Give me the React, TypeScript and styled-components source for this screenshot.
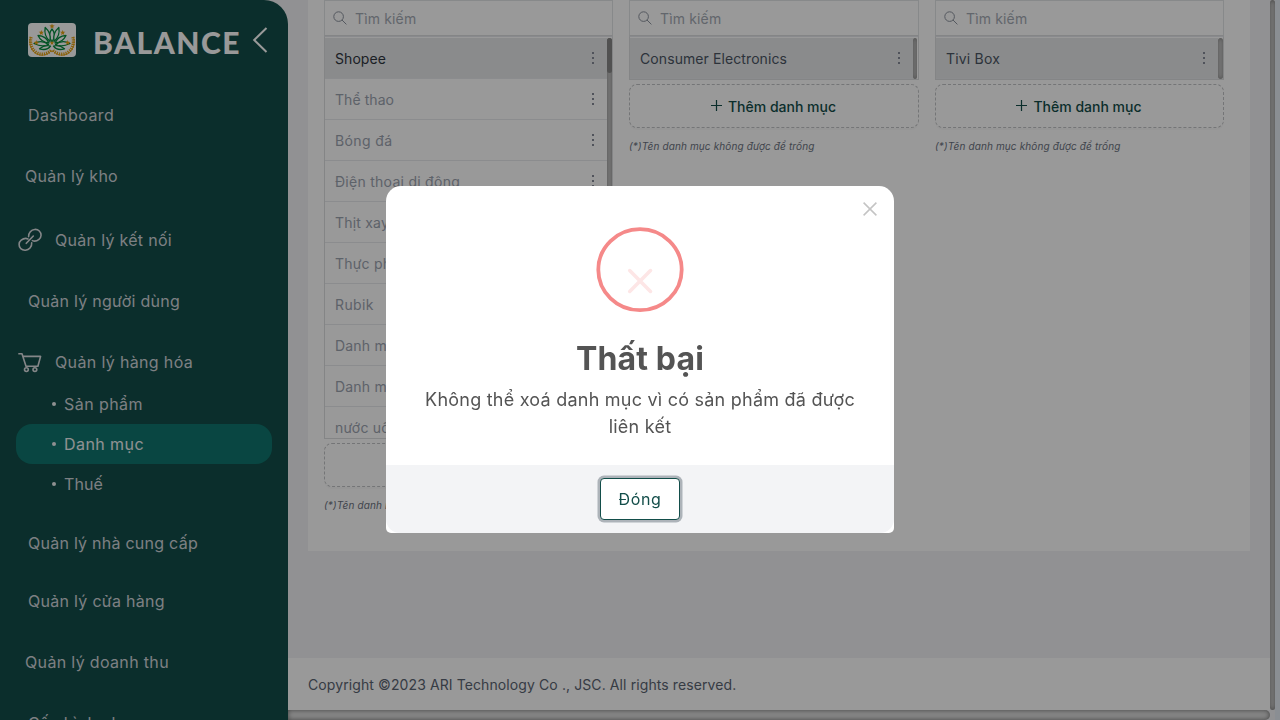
import React from 'react';
import styled, { createGlobalStyle, css } from 'styled-components';

const GlobalStyle = createGlobalStyle`
  *, *::before, *::after { box-sizing: border-box; }
  body {
    margin: 0;
    overflow: hidden;
    font-family: Inter, 'Noto Sans', sans-serif;
    background: #e6edf5;
  }
  button { font-family: inherit; cursor: pointer; }
`;

const Page = styled.div`
  display: flex;
  width: 1280px;
  height: 720px;
  overflow: hidden;
  background: #f2f2f5;
`;

/* ---------- sidebar ---------- */

const Sidebar = styled.aside`
  flex: none;
  width: 288px;
  height: 720px;
  overflow: hidden;
  background: #134e4a;
  border-top-right-radius: 24px;
`;

const Brand = styled.header`
  display: flex;
  align-items: center;
  height: 80px;
  padding-left: 28px;
`;

const LogoBox = styled.div`
  width: 48px;
  height: 34px;
  border-radius: 4px;
  overflow: hidden;
  background: #fff;
  svg { display: block; }
`;

const BrandName = styled.span`
  width: 148px;
  margin: 3px 0 0 17px;
  font: 900 30px/40px Lato, sans-serif;
  letter-spacing: 1.5px;
  color: #fff;
`;

const CollapseButton = styled.button`
  margin-left: 11px;
  padding: 0;
  border: 0;
  background: none;
  svg { display: block; }
`;

const Nav = styled.nav`
  display: flex;
  flex-direction: column;
  padding: 15px 16px 0;
`;

const NavItem = styled.a<{ $space: number; $indent: number; $track: number }>`
  display: flex;
  flex: none;
  align-items: center;
  height: 40px;
  margin-top: ${(p) => p.$space}px;
  padding-left: ${(p) => p.$indent}px;
  font-size: 16px;
  letter-spacing: ${(p) => p.$track}px;
  white-space: nowrap;
  color: #d1d5db;
`;

const NavIcon = styled.span`
  display: flex;
  width: 38px;
`;

const SubItem = styled(NavItem)<{ $active?: boolean }>`
  border-radius: 16px;
  ${(p) => p.$active && css`
    background: #0f766e;
    color: #f0f2f4;
  `}
  &::before {
    content: '';
    width: 4px;
    height: 4px;
    margin-right: 8px;
    border-radius: 50%;
    background: #eef0f2;
  }
`;

/* ---------- content ---------- */

const Main = styled.div`
  display: flex;
  flex-direction: column;
  flex: none;
  width: 982px;
  height: 720px;
`;

const Card = styled.section`
  display: flex;
  align-items: flex-start;
  gap: 16px;
  width: 942px;
  height: 551px;
  margin: 0 20px;
  padding: 0 16px;
  background: #fff;
`;

const Column = styled.div<{ $width: number }>`
  flex: none;
  width: ${(p) => p.$width}px;
`;

const SearchField = styled.div`
  display: flex;
  align-items: center;
  gap: 8px;
  height: 36px;
  padding: 0 0 0 8px;
  border: 1px solid #e2e4e6;
  border-bottom-color: #dcdee0;
  font-size: 14px;
  letter-spacing: 0.15px;
  color: #a4aab4;
  svg { margin-top: -1px; }
`;

const List = styled.div<{ $height: number }>`
  display: flex;
  height: ${(p) => p.$height}px;
  padding-top: 1px;
  overflow: hidden;
  border: 1px solid #dcdee0;
  border-top-color: #e5e7eb;
`;

const Rows = styled.div`
  flex: 1;
  min-width: 0;
`;

const Row = styled.div<{ $selected?: boolean; $strong?: boolean; $track: number }>`
  display: flex;
  align-items: center;
  justify-content: space-between;
  height: 41px;
  padding: 1px 13px 0 10px;
  border-bottom: 1px solid #e8eaed;
  font-size: 14px;
  letter-spacing: ${(p) => p.$track}px;
  white-space: nowrap;
  color: ${(p) => (p.$strong ? '#30363f' : p.$selected ? '#4b5563' : '#9ca3af')};
  background: ${(p) => (p.$selected ? '#e6e8ea' : '#fff')};
`;

const Dots = styled.span`
  display: flex;
  flex-direction: column;
  gap: 3px;
  margin-top: -1px;
  i {
    width: 2px;
    height: 2px;
    background: #858b98;
  }
`;

const Track = styled.div<{ $inset: number }>`
  flex: none;
  width: ${(p) => 5 - p.$inset}px;
  margin-right: ${(p) => p.$inset}px;
  border-radius: 3px;
  background: #d0d0d0;
  box-shadow: inset 0 0 4px rgba(0, 0, 0, 0.4);
`;

const Thumb = styled.div`
  height: 35px;
  border-radius: 3px;
  background: #888;
`;

const AddButton = styled.button`
  display: flex;
  align-items: center;
  justify-content: center;
  gap: 6px;
  width: 100%;
  height: 44px;
  margin: 4px 0 0;
  padding: 1px 1px 0 0;
  border: 1px dashed #c2c4c6;
  border-radius: 8px;
  background: #fff;
  box-shadow: 0 2px 0 rgba(0, 0, 0, 0.02);
  font-size: 14px;
  font-weight: 450;
  color: #134e4a;
  svg { margin-top: -2px; }
`;

const Hint = styled.p`
  margin: 9px 0 0;
  font-size: 10px;
  line-height: 18px;
  font-style: italic;
  letter-spacing: 0.13px;
  color: #6b7280;
`;

const Footer = styled.footer`
  height: 52px;
  margin-top: 107px;
  padding: 1px 20px 0;
  font-size: 14px;
  line-height: 52px;
  letter-spacing: 0.1px;
  color: #5b6472;
  background: #fff;
`;

const ScrollBar = styled.div<{ $vertical?: boolean }>`
  flex: none;
  border-radius: 5px;
  background: #dedede;
  box-shadow: inset 0 0 5px rgba(0, 0, 0, 0.5);
  ${(p) => (p.$vertical
    ? css`width: 5px; height: 710px; background: #dedede;`
    : css`height: 10px; border-top-left-radius: 0; border-bottom-left-radius: 0;`)}
`;

const Edge = styled.div`
  flex: 1;
  background: #e6edf5;
`;

/* ---------- dialog ---------- */

const Backdrop = styled.div`
  position: fixed;
  inset: 0;
  display: flex;
  align-items: center;
  justify-content: center;
  padding-bottom: 1px;
  background: rgba(0, 0, 0, 0.4);
`;

const Dialog = styled.div`
  position: relative;
  display: flex;
  flex-direction: column;
  align-items: center;
  width: 508px;
  height: 347px;
  border-radius: 15px 15px 5px 5px;
  overflow: hidden;
  background: #fff;
`;

const CloseButton = styled.button`
  position: absolute;
  top: 16px;
  right: 17px;
  padding: 0;
  border: 0;
  background: none;
  svg { display: block; }
`;

const ErrorMark = styled.svg`
  flex: none;
  margin-top: 41px;
`;

const Title = styled.h2`
  margin: 24px 0 0;
  font-size: 32px;
  line-height: 44px;
  font-weight: 700;
  letter-spacing: 0.15px;
  color: #545454;
`;

const Message = styled.p`
  width: 450px;
  margin: 5px 0 0;
  font-size: 18px;
  line-height: 27px;
  letter-spacing: 0.23px;
  text-align: center;
  color: #545454;
`;

const Actions = styled.div`
  display: flex;
  justify-content: center;
  align-items: center;
  width: 100%;
  height: 68px;
  margin-top: auto;
  border-radius: 0 0 14px 14px;
  background: #f3f4f6;
`;

const ConfirmButton = styled.button`
  width: 80px;
  height: 42px;
  padding: 0;
  border: 1px solid #134e4a;
  border-radius: 4px;
  background: #fff;
  box-shadow: 0 0 0 2.5px #adb3b9;
  font-size: 16px;
  letter-spacing: 0.65px;
  color: #134e4a;
`;

/* ---------- drawings ---------- */

const star = (x: number, y: number, r: number) =>
  Array.from({ length: 10 }, (_, i) => {
    const radius = i % 2 ? r * 0.42 : r;
    const a = (i * Math.PI) / 5 - Math.PI / 2;
    return `${(x + radius * Math.cos(a)).toFixed(2)},${(y + radius * Math.sin(a)).toFixed(2)}`;
  }).join(' ');

const Laurel = () => (
  <g fill="none" stroke="#e5a215">
    <path d="M2.5 14C1 19 2 27 8 30.5C13 33.5 19 32.5 23.5 27.5" strokeWidth="0.9" />
    <path d="M3.2 14C1.7 19 2.7 26 8.5 29.6C13 32.3 19 31.5 23 27.3" strokeWidth="3.2" strokeDasharray="1.3 1" />
  </g>
);

const Logo = () => (
  <svg width="48" height="34" viewBox="0 0 48 34">
    <Laurel />
    <g transform="matrix(-1 0 0 1 48 0)"><Laurel /></g>
    <g fill="#fff" stroke="#078a3e" strokeWidth="1.3" strokeLinejoin="round">
      <path d="M24 19C20.5 14 21 9.5 24 6C27 9.5 27.5 14 24 19Z" />
      <path d="M22 18.5C17.5 14.5 16.2 9.5 17.2 4.5C21.3 8 23 13 22 18.5Z" />
      <path d="M26 18.5C30.5 14.5 31.8 9.5 30.8 4.5C26.7 8 25 13 26 18.5Z" />
      <path d="M21 20C15.5 19.5 12 16.8 10 12.5C15.5 12.8 19 15 21 20Z" />
      <path d="M27 20C32.5 19.5 36 16.8 38 12.5C32.5 12.8 29 15 27 20Z" />
      <path d="M20.5 21.5C15.5 24 11 23 6 20.5C11 17.8 16 18 20.5 21.5Z" />
      <path d="M27.5 21.5C32.5 24 37 23 42 20.5C37 17.8 32 18 27.5 21.5Z" />
      <path d="M22.5 23C20 26.5 15.5 27 11.5 25.8C15 22.8 19 22 22.5 23Z" />
      <path d="M25.5 23C28 26.5 32.5 27 36.5 25.8C33 22.8 29 22 25.5 23Z" />
    </g>
    <g fill="#e5a215">
      <polygon points={star(24, 3.3, 2.8)} />
      <polygon points={star(13.3, 9.7, 2.8)} />
      <polygon points={star(34.7, 9.7, 2.8)} />
      <polygon points={star(8.3, 19.8, 2.8)} />
      <polygon points={star(39.7, 19.8, 2.8)} />
      <polygon points={star(24, 20, 2.4)} />
    </g>
  </svg>
);

const LinkIcon = () => (
  <svg width="26" height="26" viewBox="0 0 26 26" fill="none" stroke="#dcdfe3" strokeWidth="1.6" strokeLinecap="round">
    <path d="M11.6 9.6C11.4 7.6 12 6.2 13.3 4.7C15.6 2 19.8 1.6 22.3 4C24.8 6.4 24.6 10.2 22 12.3C19.8 14.1 17.3 14.5 15.4 13.6" />
    <path d="M14.7 15.8C14.9 17.8 14.4 19.4 13 21C10.7 23.6 6.4 24.1 3.8 21.7C1.3 19.2 1.6 15.3 4.2 13.2C6.3 11.5 8.9 11 11 11.9" />
    <path d="M9.3 16.3L16.3 9" />
  </svg>
);

const CartIcon = () => (
  <svg width="26" height="26" viewBox="0 0 26 26" fill="none" stroke="#dcdfe3" strokeWidth="1.6" strokeLinejoin="round">
    <path d="M1.3 4.7H5L9 17.3H20.9L23.6 7.4H6.1" />
    <circle cx="9.4" cy="20.6" r="1.9" />
    <circle cx="17.9" cy="20.6" r="1.9" />
  </svg>
);

const SearchIcon = () => (
  <svg width="14" height="14" viewBox="0 0 14 14" fill="none" stroke="#8c939e" strokeWidth="1">
    <circle cx="5.6" cy="5.6" r="4.8" />
    <path d="M9 9L13.4 13.4" />
  </svg>
);

const PlusIcon = () => (
  <svg width="11" height="11" viewBox="0 0 11 11" stroke="#134e4a" strokeWidth="1.2">
    <path d="M5.5 0V11M0 5.5H11" />
  </svg>
);

/* ---------- data ---------- */

type Entry = { label: string; track: number };

const categories: Entry[] = [
  { label: 'Shopee', track: 0.07 },
  { label: 'Thể thao', track: 0.06 },
  { label: 'Bóng đá', track: 0.4 },
  { label: 'Điện thoại di động', track: 0.27 },
  { label: 'Thịt xay', track: 0.2 },
  { label: 'Thực phẩm', track: 0.2 },
  { label: 'Rubik', track: 0.4 },
  { label: 'Danh mục', track: 0.2 },
  { label: 'Danh mục', track: 0.2 },
  { label: 'nước uống', track: 0.2 },
];

type ColumnProps = {
  entries: Entry[];
  width: number;
  listHeight: number;
  inset?: number;
  scrollable?: boolean;
};

const CategoryColumn = ({ entries, width, listHeight, inset = 0, scrollable }: ColumnProps) => (
  <Column $width={width}>
    <SearchField><SearchIcon />Tìm kiếm</SearchField>
    <List $height={listHeight}>
      <Rows>
        {entries.map((entry, i) => (
          <Row key={i} $selected={i === 0} $strong={i === 0 && scrollable} $track={entry.track}>
            {entry.label}
            <Dots><i /><i /><i /></Dots>
          </Row>
        ))}
      </Rows>
      <Track $inset={inset}>{scrollable && <Thumb />}</Track>
    </List>
    <AddButton><PlusIcon />Thêm danh mục</AddButton>
    <Hint>(*)Tên danh mục không được để trống</Hint>
  </Column>
);

export default function App() {
  return (
    <>
      <GlobalStyle />
      <Page>
        <Sidebar>
          <Brand>
            <LogoBox><Logo /></LogoBox>
            <BrandName>BALANCE</BrandName>
            <CollapseButton aria-label="Thu gọn">
              <svg width="16" height="26" viewBox="0 0 16 26" fill="none" stroke="#fff" strokeWidth="2">
                <path d="M14.5 1L2.2 13L14.5 25" />
              </svg>
            </CollapseButton>
          </Brand>
          <Nav>
            <NavItem $space={0} $indent={12} $track={0.4}>Dashboard</NavItem>
            <NavItem $space={21} $indent={9} $track={0.28}>Quản lý kho</NavItem>
            <NavItem $space={24} $indent={1} $track={0.3}><NavIcon><LinkIcon /></NavIcon>Quản lý kết nối</NavItem>
            <NavItem $space={21} $indent={12} $track={0.27}>Quản lý người dùng</NavItem>
            <NavItem $space={21} $indent={1} $track={0.35}><NavIcon><CartIcon /></NavIcon>Quản lý hàng hóa</NavItem>
            <SubItem $space={2} $indent={36} $track={0.44}>Sản phẩm</SubItem>
            <SubItem $space={0} $indent={36} $track={0.43} $active>Danh mục</SubItem>
            <SubItem $space={0} $indent={36} $track={0.1}>Thuế</SubItem>
            <NavItem $space={19} $indent={12} $track={0.25}>Quản lý nhà cung cấp</NavItem>
            <NavItem $space={18} $indent={12} $track={0.29}>Quản lý cửa hàng</NavItem>
            <NavItem $space={21} $indent={9} $track={0.34}>Quản lý doanh thu</NavItem>
            <NavItem $space={21} $indent={12} $track={0.3}>Cấu hình chung</NavItem>
          </Nav>
        </Sidebar>
        <Main>
          <Card>
            <CategoryColumn entries={categories} width={289} listHeight={403} scrollable />
            <CategoryColumn entries={[{ label: 'Consumer Electronics', track: 0.09 }]} width={290} listHeight={44} inset={1} />
            <CategoryColumn entries={[{ label: 'Tivi Box', track: 0.19 }]} width={289} listHeight={44} />
          </Card>
          <Footer>Copyright ©2023 ARI Technology Co ., JSC. All rights reserved.</Footer>
          <ScrollBar />
        </Main>
        <ScrollBar $vertical />
        <Edge />
      </Page>
      <Backdrop>
        <Dialog role="dialog">
          <CloseButton aria-label="Đóng">
            <svg width="14" height="14" viewBox="0 0 14 14" stroke="#c4c4c4" strokeWidth="1.5">
              <path d="M0.6 0.6L13.4 13.4M13.4 0.6L0.6 13.4" />
            </svg>
          </CloseButton>
          <ErrorMark width="88" height="86" viewBox="0 0 88 86" fill="none">
            <ellipse cx="44" cy="42.7" rx="41.7" ry="40.5" stroke="#f58989" strokeWidth="3.8" />
            <path d="M33.7 43.6L54.5 64.4M54.5 43.6L33.7 64.4" stroke="#fde6e6" strokeWidth="3.6" strokeLinecap="round" />
          </ErrorMark>
          <Title>Thất bại</Title>
          <Message>Không thể xoá danh mục vì có sản phẩm đã được liên kết</Message>
          <Actions><ConfirmButton>Đóng</ConfirmButton></Actions>
        </Dialog>
      </Backdrop>
    </>
  );
}
